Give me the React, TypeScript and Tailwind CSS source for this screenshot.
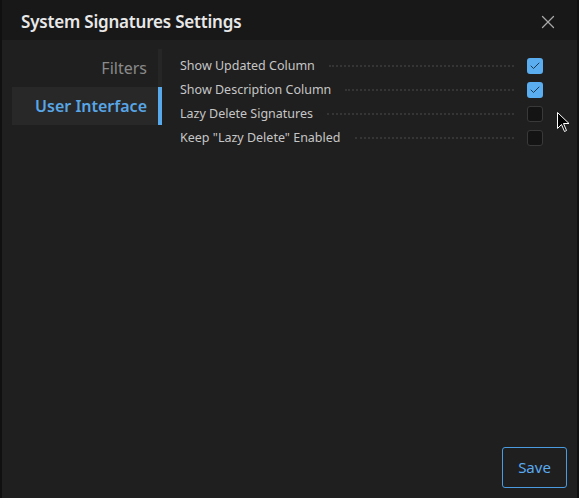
import { X, Check } from 'lucide-react';

const rows = [
  { label: 'Show Updated Column', checked: true },
  { label: 'Show Description Column', checked: true },
  { label: 'Lazy Delete Signatures', checked: false },
  { label: 'Keep "Lazy Delete" Enabled', checked: false },
];

function Checkbox({ checked }: { checked: boolean }) {
  if (checked) {
    return (
      <div className="w-[16px] h-[16px] rounded-[3px] bg-[#5aaef0] flex items-center justify-center">
        <Check className="w-[12px] h-[12px] text-[#1e3a52]" strokeWidth={2} />
      </div>
    );
  }
  return <div className="w-[16px] h-[16px] rounded-[3px] bg-[#141414] border border-[#393939]" />;
}

export default function App() {
  return (
    <div
      className="relative w-[579px] h-[498px] bg-[#101010] px-[2px] overflow-hidden"
      style={{ fontFamily: '"Noto Sans", "Open Sans", sans-serif' }}
    >
      <div className="flex flex-col h-full">
        <div className="h-[40px] bg-[#181818] flex items-center justify-between pl-[19px] pr-[18px] pt-[3px] shrink-0">
          <h1 className="text-[17px] font-semibold text-[#e8e8e8] tracking-[-0.2px]">System Signatures Settings</h1>
          <X className="w-[22px] h-[22px] text-[#a8a8a8]" strokeWidth={1.4} />
        </div>

        <div className="flex-1 bg-[#1f1f1f] flex flex-col">
          <div className="flex flex-1">
            <div className="w-[160px] pt-[9px] shrink-0">
              <div className="flex flex-col pl-[10px]">
                <div className="flex h-[38px]">
                  <div className="flex-1 flex items-center justify-end pr-[11px] text-[16px] text-[#8a8a8a]">Filters</div>
                  <div className="w-[4px] bg-[#262626]" />
                </div>
                <div className="flex h-[38px]">
                  <div className="flex-1 flex items-center justify-end pr-[11px] text-[16px] font-semibold text-[#58a6e6] bg-[#282828]">
                    User Interface
                  </div>
                  <div className="w-[4px] bg-[#58a9ec]" />
                </div>
              </div>
            </div>

            <div className="flex-1 pl-[18px] pr-[34px] pt-[14px]">
              {rows.map((row) => (
                <div key={row.label} className="flex items-center h-[24px]">
                  <span className="text-[12.5px] text-[#c6c6c6]">{row.label}</span>
                  <div className="flex-1 ml-[14px] mr-[13px] border-t-2 border-dotted border-[#353535]" />
                  <Checkbox checked={row.checked} />
                </div>
              ))}
            </div>
          </div>

          <div className="flex justify-end pr-[10px] pb-[10px]">
            <button className="w-[65px] h-[41px] rounded-[3px] border border-[#4a9be0] text-[15px] text-[#5aaaf0]">
              Save
            </button>
          </div>
        </div>
      </div>

      <svg className="absolute left-[557px] top-[112px]" width="13" height="21" viewBox="0 0 13 21">
        <path d="M0.5 0.5 L0.5 16.5 L4.5 12.5 L7.5 19.5 L9.5 18.5 L6.5 11.5 L12 11.5 Z" fill="#000" stroke="#fff" strokeWidth="1" />
      </svg>
    </div>
  );
}
